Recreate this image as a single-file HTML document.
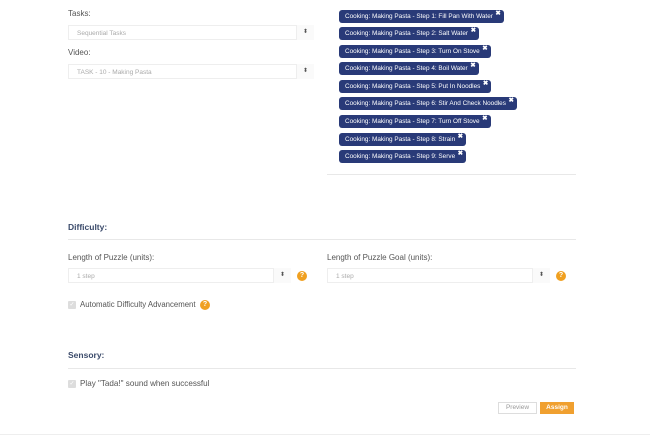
<!DOCTYPE html>
<html><head><meta charset="utf-8"><style>
*{margin:0;padding:0;box-sizing:border-box}
body{width:650px;height:442px;background:#fff;font-family:"Liberation Sans",sans-serif;position:relative;overflow:hidden;color:#555}
.a{position:absolute}
.lbl{font-size:8px;color:#555}
.sel{position:absolute;height:15px;border:1px solid #eee;border-right:none;background:#fff;font-size:6.5px;color:#aaa;padding:4px 0 0 8px}
.sel .ar{position:absolute;right:0;top:-1px;width:18px;height:15px;border-left:1px solid #eee;background:#fafafa;font-size:6px;color:#555;text-align:center;line-height:15px}
.tag{position:absolute;left:339px;height:13px;background:#293a78;border-radius:3px;color:#fff;font-size:6.4px;line-height:13px;padding:0 11px 0 6px;white-space:nowrap}
.tag b{position:absolute;right:3px;top:-3px;font-size:6.5px}
.h{font-size:8.5px;font-weight:bold;color:#3a4a6a}
.line{position:absolute;height:1px;background:#e8e8e8}
.q{position:absolute;width:10px;height:10px;border-radius:50%;background:#f0a020;color:#fff;font-size:7px;font-weight:bold;text-align:center;line-height:10px}
.cb{position:absolute;width:8px;height:8px;background:#ddd;border-radius:1px;color:#fff;font-size:6px;line-height:8px;text-align:center}
</style></head><body>
<div class="a lbl" style="left:68px;top:9px">Tasks:</div>
<div class="sel" style="left:68px;top:25px;width:246px">Sequential Tasks<div class="ar">⬍</div></div>
<div class="a lbl" style="left:68px;top:48px">Video:</div>
<div class="sel" style="left:68px;top:64px;width:246px">TASK - 10 - Making Pasta<div class="ar">⬍</div></div>

<div class="tag" style="top:10px">Cooking: Making Pasta - Step 1: Fill Pan With Water<b>✖</b></div>
<div class="tag" style="top:27px">Cooking: Making Pasta - Step 2: Salt Water<b>✖</b></div>
<div class="tag" style="top:45px">Cooking: Making Pasta - Step 3: Turn On Stove<b>✖</b></div>
<div class="tag" style="top:62px">Cooking: Making Pasta - Step 4: Boil Water<b>✖</b></div>
<div class="tag" style="top:80px">Cooking: Making Pasta - Step 5: Put In Noodles<b>✖</b></div>
<div class="tag" style="top:97px">Cooking: Making Pasta - Step 6: Stir And Check Noodles<b>✖</b></div>
<div class="tag" style="top:115px">Cooking: Making Pasta - Step 7: Turn Off Stove<b>✖</b></div>
<div class="tag" style="top:133px">Cooking: Making Pasta - Step 8: Strain<b>✖</b></div>
<div class="tag" style="top:150px">Cooking: Making Pasta - Step 9: Serve<b>✖</b></div>
<div class="line" style="left:327px;top:174px;width:249px"></div>

<div class="a h" style="left:68px;top:222px">Difficulty:</div>
<div class="line" style="left:68px;top:239px;width:508px"></div>
<div class="a lbl" style="left:68px;top:253px">Length of Puzzle (units):</div>
<div class="sel" style="left:68px;top:268px;width:223px">1 step<div class="ar">⬍</div></div>
<div class="q" style="left:297px;top:271px">?</div>
<div class="a lbl" style="left:327px;top:253px">Length of Puzzle Goal (units):</div>
<div class="sel" style="left:327px;top:268px;width:223px;border-right:1px solid #eee">1 step<div class="ar" style="right:-1px">⬍</div></div>
<div class="q" style="left:556px;top:271px">?</div>
<div class="cb" style="left:68px;top:301px">✓</div>
<div class="a lbl" style="left:80px;top:300px;font-size:7.8px">Automatic Difficulty Advancement</div>
<div class="q" style="left:200px;top:300px">?</div>

<div class="a h" style="left:68px;top:350px">Sensory:</div>
<div class="line" style="left:68px;top:368px;width:508px"></div>
<div class="cb" style="left:68px;top:380px">✓</div>
<div class="a lbl" style="left:80px;top:379px;font-size:8.1px">Play "Tada!" sound when successful</div>

<div class="a" style="left:498px;top:402px;width:39px;height:12px;border:1px solid #ddd;font-size:6.5px;color:#999;text-align:center;line-height:10px">Preview</div>
<div class="a" style="left:540px;top:402px;width:34px;height:12px;background:#f0a030;font-size:6.5px;color:#fff;text-align:center;line-height:12px;font-weight:bold">Assign</div>
<div class="line" style="left:0;top:434px;width:650px;background:#eee"></div>
</body></html>
